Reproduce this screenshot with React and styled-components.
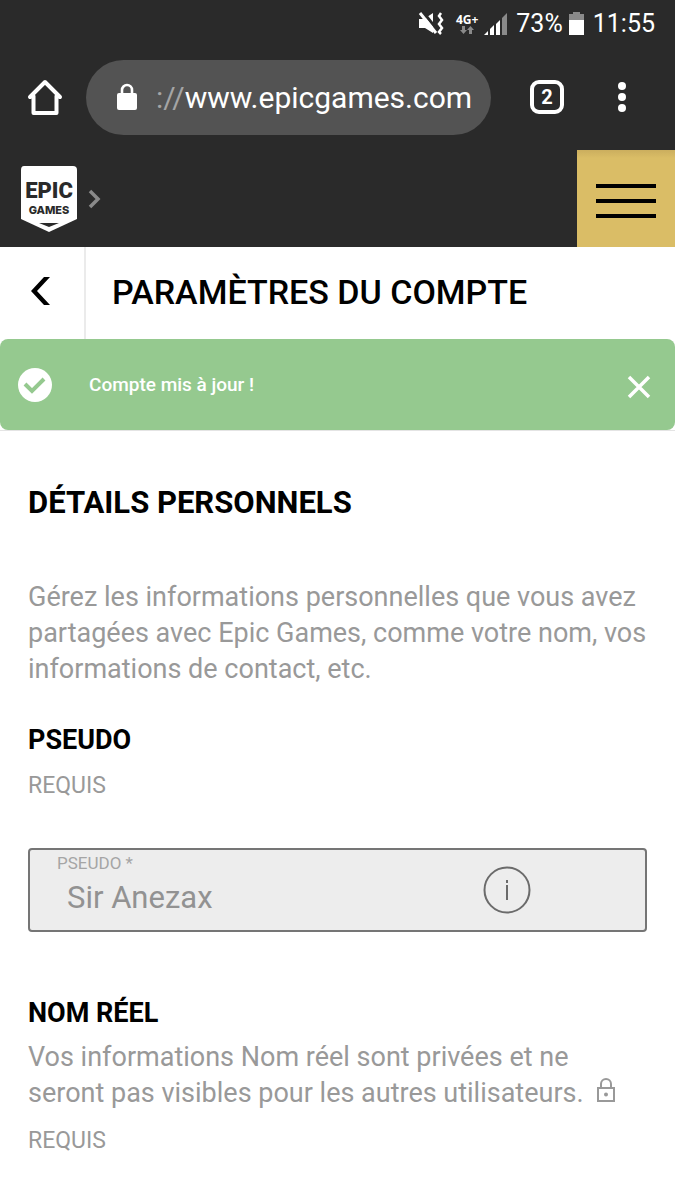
import React from "react";
import styled, { createGlobalStyle } from "styled-components";

const GlobalStyle = createGlobalStyle`
  *, *::before, *::after { box-sizing: border-box; }
  body { margin: 0; background: #fff; font-family: Roboto, "Liberation Sans", sans-serif; }
  h1, h2, h3, p { margin: 0; }
  button { border: 0; padding: 0; background: none; color: inherit; font: inherit; cursor: pointer; }
  svg { display: block; flex: none; }
`;

const StatusBar = styled.div`
  display: flex;
  align-items: center;
  justify-content: flex-end;
  height: 48px;
  padding: 0 20px;
  background: #2a2a2a;
  color: #fff;
  font-size: 25px;
  line-height: 48px;
`;

const Network = styled.div`
  display: flex;
  flex-direction: column;
  align-items: center;
  margin: 0 6px 0 12px;
  font-family: "Noto Sans", sans-serif;
  font-size: 12px;
  font-weight: 700;
  line-height: 13px;
`;

const StatusText = styled.span`
  margin-left: ${(p) => p.$gap}px;
`;

const BrowserBar = styled.div`
  display: flex;
  align-items: center;
  height: 102px;
  padding: 0 32px 4px 24px;
  background: #2a2a2a;
  color: #fff;
`;

const IconButton = styled.button`
  display: grid;
  place-items: center;
  width: ${(p) => p.$size || 42}px;
  height: 48px;
`;

const UrlBar = styled.div`
  display: flex;
  align-items: center;
  flex: 1;
  min-width: 0;
  height: 75px;
  margin: 0 39px 0 20px;
  padding: 0 16px 0 30px;
  border-radius: 38px;
  background: #535353;
`;

const Url = styled.span`
  margin-left: 18px;
  padding-top: 2px;
  font-size: 30px;
  line-height: 40px;
  white-space: nowrap;
  overflow: hidden;
`;

const Scheme = styled.span`
  color: #a5a5a5;
`;

const TabButton = styled(IconButton)`
  width: 34px;
  height: 34px;
  margin-right: 37px;
  border: 4px solid #fff;
  border-radius: 9px;
  font-size: 20px;
  font-weight: 700;
  line-height: 20px;
`;

const SiteNav = styled.nav`
  display: flex;
  align-items: center;
  height: 97px;
  padding-left: 20px;
  background: #2a2a2a;
`;

const Brand = styled.a`
  margin-right: 10px;
`;

const MenuButton = styled.button`
  display: grid;
  place-items: center;
  width: 98px;
  height: 97px;
  margin-left: auto;
  padding-top: 4px;
  background: linear-gradient(#cbae5e, #dabd66 8px);
`;

const PageHeader = styled.header`
  display: flex;
  height: 92px;
`;

const BackButton = styled.button`
  display: grid;
  align-items: center;
  width: 86px;
  padding: 0 0 4px 30px;
  border-right: 2px solid #ebebeb;
`;

const Title = styled.h1`
  padding-left: 26px;
  font-size: 34px;
  font-weight: 500;
  line-height: 90px;
  white-space: nowrap;
`;

const AlertArea = styled.div`
  border-bottom: 1px solid #e4e4e4;
`;

const Alert = styled.div`
  display: flex;
  align-items: center;
  height: 91px;
  padding: 0 15px 0 17px;
  border-radius: 8px;
  background: #95c98f;
  color: #fff;
`;

const AlertText = styled.p`
  flex: 1;
  padding-left: 36px;
  font-size: 19px;
  font-weight: 500;
  line-height: 24px;
`;

const Content = styled.main`
  padding: 52px 28px 44px;
`;

const SectionTitle = styled.h2`
  margin-bottom: 56px;
  font-size: 31px;
  font-weight: 700;
  line-height: 40px;
`;

const Text = styled.p`
  color: #999;
  font-size: 27px;
  line-height: 36px;
`;

const Group = styled.section`
  margin-top: ${(p) => p.$top}px;
`;

const GroupTitle = styled.h3`
  margin-bottom: 8px;
  font-size: 27px;
  font-weight: 700;
  line-height: 36px;
`;

const Required = styled.p`
  margin-top: ${(p) => p.$top}px;
  color: #999;
  font-size: 23px;
  line-height: 36px;
`;

const Field = styled.div`
  display: flex;
  align-items: center;
  height: 84px;
  margin-top: 44px;
  padding: 0 114px 0 27px;
  border: 2px solid #757575;
  border-radius: 4px;
  background: #ededed;
`;

const FieldBody = styled.div`
  display: flex;
  flex-direction: column;
  flex: 1;
  min-width: 0;
  height: 80px;
`;

const Label = styled.label`
  color: #a5a5a5;
  font-size: 17px;
  line-height: 26px;
`;

const Input = styled.input`
  width: 100%;
  height: 42px;
  padding: 0 10px;
  border: 0;
  background: none;
  color: #929292;
  font: 31px Roboto, "Liberation Sans", sans-serif;
`;

const InlineLock = styled.svg`
  && { display: inline-block; }
  margin-left: 12px;
  vertical-align: -2px;
`;

function Logo() {
  return (
    <svg width="58" height="66" viewBox="0 0 58 66" aria-label="Epic Games">
      <path d="M4 0H53Q57 0 57 4V53L29 66L1 53V4Q1 0 4 0Z" fill="#fff" />
      <text x="29" y="32" textAnchor="middle" fontFamily="Roboto, sans-serif" fontWeight="900" fontSize="22" fill="#2a2a2a">EPIC</text>
      <text x="29" y="48" textAnchor="middle" fontFamily="Inter, sans-serif" fontWeight="800" fontSize="11" fill="#2a2a2a">GAMES</text>
      <path d="M19 57H39L29 61Z" fill="#2a2a2a" />
    </svg>
  );
}

export default function App() {
  return (
    <>
      <GlobalStyle />
      <StatusBar>
        <svg width="26" height="24" viewBox="0 0 26 24">
          <path d="M1 7H6L15 1V21L7 16H1Z" fill="#fff" />
          <path d="M5 0L21 20" stroke="#2a2a2a" strokeWidth="3" />
          <path d="M2 1L18 21" stroke="#fff" strokeWidth="3" />
          <path d="M23 1L21 4L24 8L21 12L24 16L21 20L23 22" fill="none" stroke="#fff" strokeWidth="2.500" />
        </svg>
        <Network>
          4G+
          <svg width="14" height="9" viewBox="0 0 14 9" fill="#8a8a8a">
            <path d="M2 0H5V4H7L3.500 8L0 4H2ZM9 8H12V4H14L10.500 0L7 4H9Z" />
          </svg>
        </Network>
        <svg width="24" height="24" viewBox="0 0 24 24" fill="#fff">
          <path d="M0 23L4 19V23ZM6 17L10 13V23H6ZM12 12L16 8V23H12Z" />
          <path d="M18 6L23 1V23H18Z" fill="#8a8a8a" />
        </svg>
        <StatusText $gap={8}>73%</StatusText>
        <svg width="26" height="24" viewBox="0 0 26 24">
          <path d="M10 0H17V2H21V8H6V2H10Z" fill="#8a8a8a" />
          <path d="M6 8H21V23H6Z" fill="#fff" />
        </svg>
        <StatusText $gap={4}>11:55</StatusText>
      </StatusBar>

      <BrowserBar>
        <IconButton aria-label="Accueil">
          <svg width="36" height="36" viewBox="0 0 36 36" fill="none" stroke="#fff" strokeWidth="4" strokeLinejoin="round" strokeLinecap="round">
            <path d="M3 18L18 3L33 18M6.500 17V34H29.500V17" />
          </svg>
        </IconButton>
        <UrlBar>
          <svg width="22" height="28" viewBox="0 0 22 28">
            <path d="M6 11V7A5 5 0 0 1 16 7V11" fill="none" stroke="#fff" strokeWidth="2.600" />
            <rect x="1" y="10" width="20" height="17" rx="2" fill="#fff" />
          </svg>
          <Url><Scheme>://</Scheme>www.epicgames.com</Url>
        </UrlBar>
        <TabButton aria-label="Onglets">2</TabButton>
        <IconButton aria-label="Menu du navigateur">
          <svg width="10" height="32" viewBox="0 0 10 32" fill="#fff">
            <circle cx="5" cy="5" r="4" />
            <circle cx="5" cy="16" r="4" />
            <circle cx="5" cy="27" r="4" />
          </svg>
        </IconButton>
      </BrowserBar>

      <SiteNav>
        <Brand href="#"><Logo /></Brand>
        <svg width="14" height="20" viewBox="0 0 14 20" fill="none" stroke="#8a8a8a" strokeWidth="3.500">
          <path d="M2 2L10 10L2 18" />
        </svg>
        <MenuButton aria-label="Menu">
          <svg width="60" height="36" viewBox="0 0 60 36" fill="#000">
            <path d="M0 1H60V5H0ZM0 16H60V20H0ZM0 31H60V35H0Z" />
          </svg>
        </MenuButton>
      </SiteNav>

      <PageHeader>
        <BackButton aria-label="Retour">
          <svg width="21" height="28" viewBox="0 0 21 28">
            <path d="M14 0H20L7 14L20 28H14L1 14Z" />
          </svg>
        </BackButton>
        <Title>PARAMÈTRES DU COMPTE</Title>
      </PageHeader>

      <AlertArea>
        <Alert role="status">
          <svg width="36" height="36" viewBox="0 0 36 36">
            <circle cx="18" cy="18" r="17" fill="#fff" />
            <path d="M8 17L15 24L27 12" fill="none" stroke="#95c98f" strokeWidth="4" />
          </svg>
          <AlertText>Compte mis à jour !</AlertText>
          <IconButton aria-label="Fermer">
            <svg width="24" height="28" viewBox="0 0 24 28" stroke="#fff" strokeWidth="3.500">
              <path d="M2 6L22 26M22 6L2 26" />
            </svg>
          </IconButton>
        </Alert>
      </AlertArea>

      <Content>
        <SectionTitle>DÉTAILS PERSONNELS</SectionTitle>
        <Text>
          Gérez les informations personnelles que vous avez
          partagées avec Epic Games, comme votre nom, vos
          informations de contact, etc.
        </Text>

        <Group $top={35}>
          <GroupTitle>PSEUDO</GroupTitle>
          <Required $top={10}>REQUIS</Required>
          <Field>
            <FieldBody>
              <Label htmlFor="pseudo">PSEUDO *</Label>
              <Input id="pseudo" type="text" defaultValue="Sir Anezax" readOnly />
            </FieldBody>
            <IconButton $size={48} aria-label="Informations">
              <svg width="48" height="48" viewBox="0 0 48 48" fill="none" stroke="#6b6b6b" strokeWidth="2">
                <circle cx="24" cy="24" r="22.500" />
                <path d="M24 19V34M24 14V17" />
              </svg>
            </IconButton>
          </Field>
        </Group>

        <Group $top={63}>
          <GroupTitle>NOM RÉEL</GroupTitle>
          <Text>
            Vos informations Nom réel sont privées et ne
            seront pas visibles pour les autres utilisateurs.
            <InlineLock width="20" height="26" viewBox="0 0 20 26" fill="none" stroke="#999" strokeWidth="2">
              <path d="M2 10H18V23H2ZM5 10V6A5 5 0 0 1 15 6V10" />
              <circle cx="10" cy="16.500" r="1" fill="#999" />
            </InlineLock>
          </Text>
          <Required $top={12}>REQUIS</Required>
        </Group>
      </Content>
    </>
  );
}
